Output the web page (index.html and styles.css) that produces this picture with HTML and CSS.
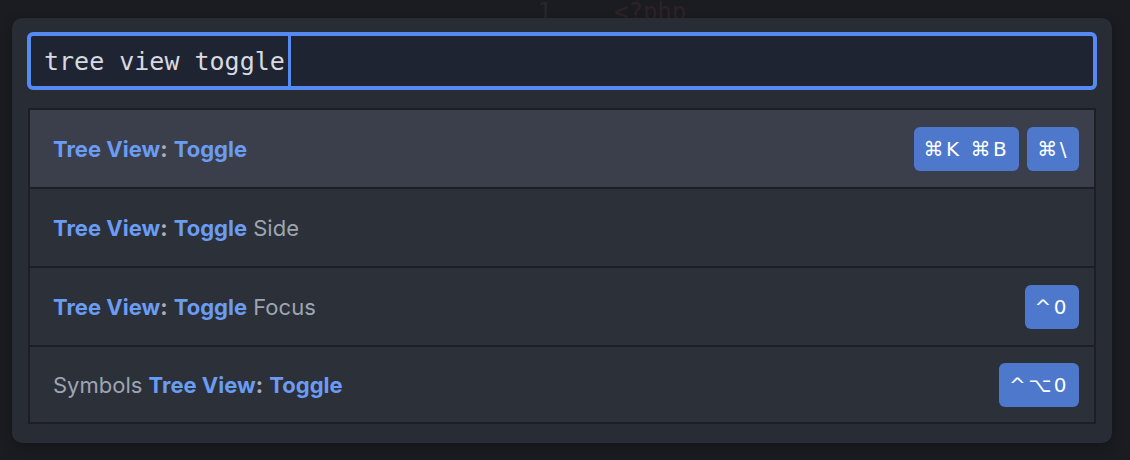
FILE: index.html
```html
<!DOCTYPE html>
<html>
<head>
<meta charset="utf-8">
<link rel="stylesheet" href="styles.css">
</head>
<body>
<div class="editor">
  <div class="line"><span class="gutter">1</span><span class="code">&lt;?php</span></div>
</div>
<div class="palette">
  <div class="query"><span class="qtext">tree view toggle</span><span class="cursor"></span></div>
  <ol class="list">
    <li class="item selected">
      <span class="label"><b class="m">Tree View</b><b class="c">:</b> <b class="m">Toggle</b></span>
      <span class="keys"><kbd class="key">⌘K ⌘B</kbd><kbd class="key">⌘\</kbd></span>
    </li>
    <li class="item">
      <span class="label"><b class="m">Tree View</b><b class="c">:</b> <b class="m">Toggle</b> Side</span>
    </li>
    <li class="item">
      <span class="label"><b class="m">Tree View</b><b class="c">:</b> <b class="m">Toggle</b> Focus</span>
      <span class="keys"><kbd class="key">^0</kbd></span>
    </li>
    <li class="item">
      <span class="label">Symbols <b class="m">Tree View</b><b class="c">:</b> <b class="m">Toggle</b></span>
      <span class="keys"><kbd class="key">^⌥0</kbd></span>
    </li>
  </ol>
</div>
</body>
</html>
```
FILE: styles.css
```css
html, body {
  margin: 0;
  padding: 0;
  background: #1b1c21;
  width: 1130px;
  height: 460px;
  overflow: hidden;
}
body {
  position: relative;
  font-family: "Inter", "DejaVu Sans", sans-serif;
}
.line {
  display: flex;
  font-family: "DejaVu Sans Mono", monospace;
  font-size: 24px;
  line-height: 22px;
  padding-top: 1px;
}
.gutter {
  width: 552px;
  text-align: right;
  color: #26282e;
}
.code {
  margin-left: 62px;
  color: #2e2226;
}
.palette {
  position: absolute;
  left: 12px;
  top: 18px;
  width: 1100px;
  height: 425px;
  box-sizing: border-box;
  background: #282c34;
  border-radius: 10px;
  padding: 14px 15px 18px 15px;
  display: flex;
  flex-direction: column;
  box-shadow: 0 4px 12px rgba(0,0,0,0.25);
}
.query {
  height: 58px;
  box-sizing: border-box;
  border: 4px solid #568af2;
  border-radius: 6px;
  background: #1f2433;
  display: flex;
  align-items: stretch;
  padding-left: 13px;
}
.qtext {
  font-family: "DejaVu Sans Mono", monospace;
  font-size: 25px;
  color: #d7dae0;
  display: flex;
  align-items: center;
  padding-top: 1px;
}
.cursor {
  width: 3px;
  background: #568af2;
  margin-left: 3px;
}
.list {
  list-style: none;
  margin: 18px 1px 0 1px;
  padding: 0;
  border: 2px solid #1d1f25;
  background: #1d1f25;
  display: flex;
  flex-direction: column;
  gap: 2px;
}
.item {
  height: 77px;
  background: #2c3039;
  display: flex;
  align-items: center;
  justify-content: space-between;
  padding: 0 15px 0 23px;
  font-size: 22px;
  color: #9da5b4;
}
.item:last-child {
  height: 75px;
}
.item.selected {
  background: #3b3f4b;
}
.m {
  color: #6b9cf3;
  font-weight: 700;
}
.c {
  color: #a8afbd;
  font-weight: 700;
}
.keys {
  display: flex;
  gap: 8px;
}
.key {
  font-family: "DejaVu Sans", sans-serif;
  font-size: 20px;
  color: #ffffff;
  background: #4d78cc;
  border-radius: 6px;
  height: 44px;
  display: flex;
  align-items: center;
  padding: 0 10px;
  letter-spacing: 2.5px;
}
```
